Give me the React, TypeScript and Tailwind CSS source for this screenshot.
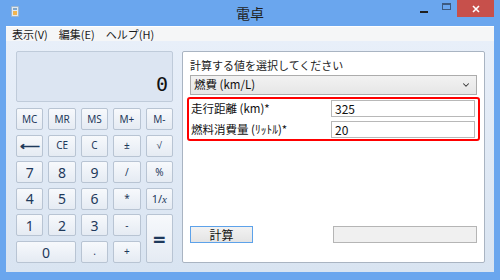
import { ChevronDown } from 'lucide-react';

const font = "font-['Noto_Sans','Noto_Sans_CJK_JP',sans-serif]";

type Key = { label: React.ReactNode; cls?: string; size?: string };

const keys: Key[] = [
  { label: 'MC', size: 'text-[10px]' },
  { label: 'MR', size: 'text-[10px]' },
  { label: 'MS', size: 'text-[10px]' },
  { label: 'M+', size: 'text-[10px]' },
  { label: 'M-', size: 'text-[10px]' },
  { label: '⟵', size: 'text-[14px] font-bold' },
  { label: 'CE', size: 'text-[10px]' },
  { label: 'C', size: 'text-[10px]' },
  { label: '±', size: 'text-[10px]' },
  { label: '√', size: 'text-[10px]' },
  { label: '7' },
  { label: '8' },
  { label: '9' },
  { label: '/', size: 'text-[10px]' },
  { label: '%', size: 'text-[10px]' },
  { label: '4' },
  { label: '5' },
  { label: '6' },
  { label: '*', size: 'text-[10px]' },
  { label: <span>1/<i className="font-['Liberation_Serif',serif]">x</i></span>, size: 'text-[11px]' },
  { label: '1' },
  { label: '2' },
  { label: '3' },
  { label: '-', size: 'text-[10px]' },
  { label: '=', cls: 'row-span-2', size: 'text-[22px] font-bold' },
  { label: '0', cls: 'col-span-2' },
  { label: '.', size: 'text-[10px]' },
  { label: '+', size: 'text-[10px]' },
];

export default function App() {
  return (
    <div className={`w-[500px] h-[280px] bg-[#6aa6ee] flex flex-col overflow-hidden ${font}`}>
      {/* Title bar */}
      <div className="h-[26px] flex items-start shrink-0">
        <div className="w-[88px] pl-[11px] pt-[6px]">
          <div className="w-[8px] h-[11px] rounded-[1px] bg-[#dfe9f3] border border-[#9fb6cc] flex flex-col gap-[1px] p-[1px]">
            <div className="h-[2px] bg-[#7fa6cc]" />
            <div className="flex-1 bg-[#f3b54e]" />
          </div>
        </div>
        <div className="flex-1 text-center text-[14px] leading-[26px] text-[#1f1f1f] font-['Noto_Sans_CJK_JP',sans-serif]">電卓</div>
        <div className="w-[88px] flex items-start justify-end pr-[6px]">
          <div className="w-[22px] h-[17px] flex items-center justify-center">
            <div className="w-[8px] h-[2px] bg-[#1f1f1f] mt-[6px]" />
          </div>
          <div className="w-[22px] h-[17px] flex items-center justify-center">
            <div className="w-[9px] h-[7px] border border-[#3d5a80] border-t-2 -mt-[4px]" />
          </div>
          <div className="w-[37px] h-[17px] bg-[#c7504b] flex items-center justify-center">
            <svg width="8" height="8" viewBox="0 0 8 8">
              <path d="M1 1 L7 7 M7 1 L1 7" stroke="#fff" strokeWidth="1.6" />
            </svg>
          </div>
        </div>
      </div>

      <div className="flex-1 mx-[6px] mb-[8px] flex flex-col">
        {/* Menu bar */}
        <div className="h-[15px] bg-[#f5f6f7] border-t border-white flex items-center gap-[11px] pl-[6px] text-[11px] text-[#1a1a1a] font-['Noto_Sans_CJK_JP',sans-serif] shrink-0">
          <span>表示(V)</span>
          <span>編集(E)</span>
          <span>ヘルプ(H)</span>
        </div>

        {/* Body */}
        <div className="flex-1 bg-gradient-to-b from-[#e8eff9] to-[#d9e4f1] flex gap-[9px] pl-[10px] pr-[9px] pt-[10px] pb-[9px]">
          {/* Calculator */}
          <div className="w-[157px] flex flex-col gap-[6px]">
            <div className="h-[51px] rounded-[2px] border border-[#bfcbda] bg-[#dce5f2] flex items-end justify-end pr-[4px] pb-[7px]">
              <span className="text-[20px] leading-none text-[#111] font-['DejaVu_Sans_Mono',monospace] slashed-zero">0</span>
            </div>
            <div className="h-[155px] grid grid-cols-5 grid-rows-6 gap-x-[5px] gap-y-[4.6px]">
              {keys.map((k, i) => (
                <div
                  key={i}
                  className={`rounded-[2px] border border-[#b8c4d3] bg-gradient-to-b from-[#f7f9fc] to-[#e5ebf3] flex items-center justify-center text-[#1e395b] ${k.size ?? 'text-[14px]'} ${k.cls ?? ''} font-['Noto_Sans',sans-serif]`}
                >
                  {k.label}
                </div>
              ))}
            </div>
          </div>

          {/* Unit panel */}
          <div className="flex-1 bg-white border border-[#a9b4c2] rounded-[2px] flex flex-col px-[7px] pt-[6px] font-['Noto_Sans_CJK_JP',sans-serif]">
            <div className="text-[11px] leading-[14px] text-[#222]">計算する値を選択してください</div>
            <div className="mt-[3px] h-[20px] border border-[#acacac] bg-gradient-to-b from-[#f2f2f2] to-[#e6e6e6] flex items-center justify-between pl-[3px] pr-[5px]">
              <span className="text-[11.5px] text-[#111]">燃費 (km/L)</span>
              <ChevronDown className="size-[10px] text-[#333]" strokeWidth={2.5} />
            </div>
            <div className="mt-[2px] -mx-[3px] h-[44px] border-2 border-[#ff0000] rounded-[3px] flex flex-col justify-center gap-[3px] pl-[2px] pr-[3px]">
              <div className="flex items-center justify-between">
                <span className="text-[11.5px] text-[#111]">走行距離 (km)*</span>
                <div className="w-[144px] h-[17px] border border-[#b8b8b8] text-[12px] leading-[15px] pl-[3px] text-[#111]">325</div>
              </div>
              <div className="flex items-center justify-between">
                <span className="text-[11.5px] text-[#111]">燃料消費量 (ﾘｯﾄﾙ)*</span>
                <div className="w-[144px] h-[17px] border border-[#b8b8b8] text-[12px] leading-[15px] pl-[3px] text-[#111]">20</div>
              </div>
            </div>
            <div className="flex-1" />
            <div className="flex items-center justify-between pb-[19px]">
              <div className="w-[63px] h-[17px] border border-[#5da2ea] bg-gradient-to-b from-[#f2f2f2] to-[#e4e4e4] flex items-center justify-center text-[12px] text-[#111]">計算</div>
              <div className="w-[144px] h-[17px] border border-[#b5b5b5] bg-[#f0f0f0]" />
            </div>
          </div>
        </div>
      </div>
    </div>
  );
}
